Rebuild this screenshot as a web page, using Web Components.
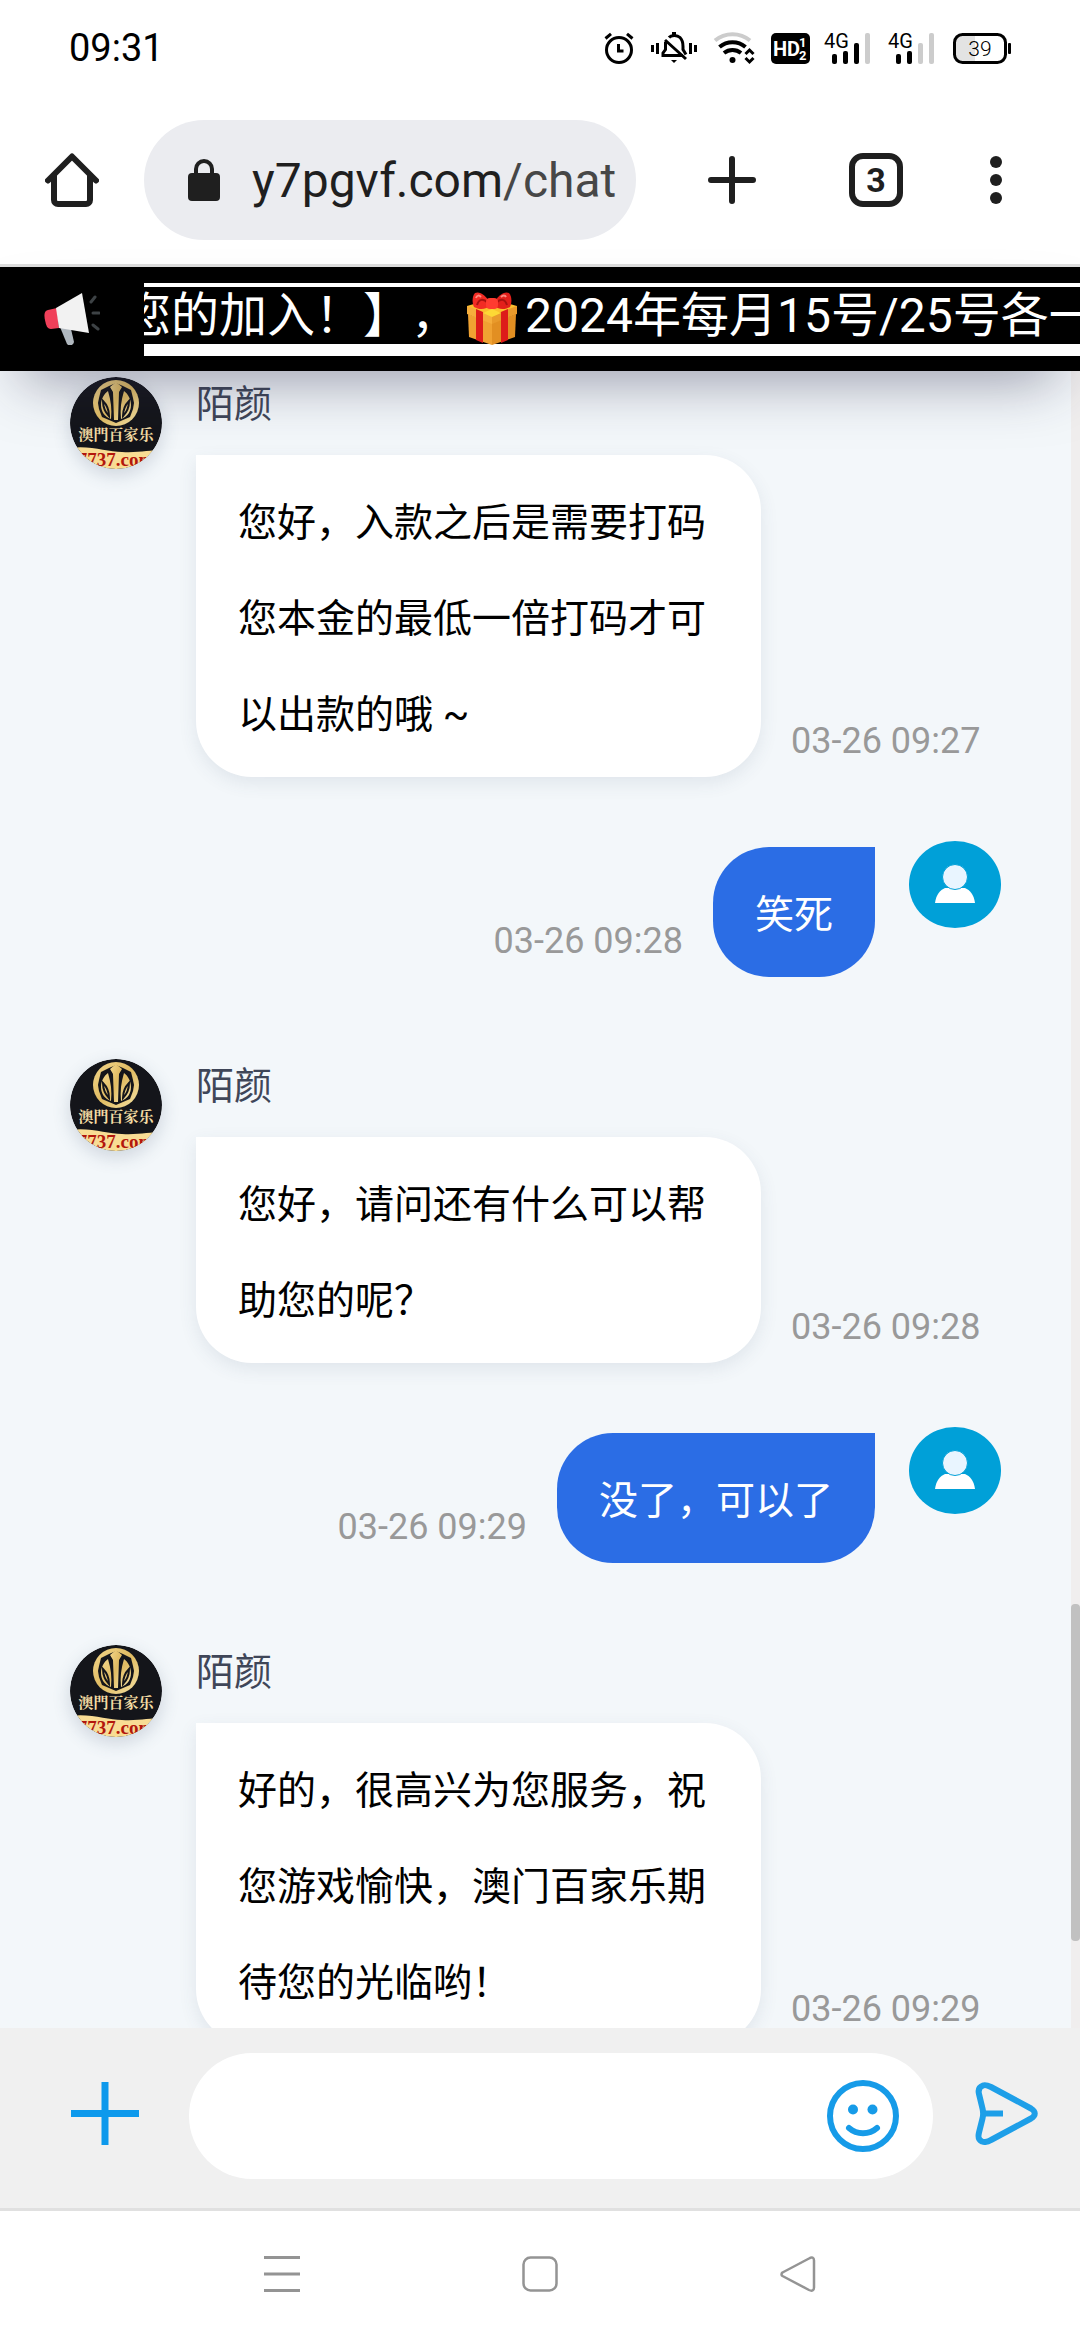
<!DOCTYPE html>
<html lang="zh-CN">
<head>
<meta charset="utf-8">
<meta name="viewport" content="width=device-width, initial-scale=1">
<title>chat</title>
<style>
  body {
    margin: 0;
    height: 100vh;
    display: flex;
    flex-direction: column;
    background: #fff;
    color: #000;
    font-family: Roboto, "Noto Sans CJK SC", sans-serif;
    overflow: hidden;
  }
</style>
</head>
<body>
<status-bar time="09:31" battery="39"></status-bar>
<browser-bar host="y7pgvf.com" path="/chat" tabs="3"></browser-bar>
<notice-bar>您的加入！】，<gift-icon></gift-icon>2024年每月15号/25号各一次</notice-bar>
<chat-log>
  <agent-message name="陌颜" time="03-26 09:27">您好，入款之后是需要打码您本金的最低一倍打码才可以出款的哦 ~</agent-message>
  <user-message time="03-26 09:28">笑死</user-message>
  <agent-message name="陌颜" time="03-26 09:28">您好，请问还有什么可以帮助您的呢？</agent-message>
  <user-message time="03-26 09:29">没了，可以了</user-message>
  <agent-message name="陌颜" time="03-26 09:29">好的，很高兴为您服务，祝您游戏愉快，澳门百家乐期待您的光临哟！</agent-message>
</chat-log>
<chat-composer></chat-composer>
<nav-bar></nav-bar>

<script>
const buttonReset = `
  button {
    display: flex;
    align-items: center;
    justify-content: center;
    flex: none;
    margin: 0;
    padding: 0;
    border: 0;
    background: none;
    font: inherit;
    color: inherit;
  }
  svg { display: block; flex: none; }`;

class StatusBar extends HTMLElement {
  constructor() {
    super();
    this.attachShadow({ mode: "open" });
    this.shadowRoot.innerHTML = `
    <style>
      :host {
        display: flex;
        flex: none;
        align-items: center;
        justify-content: space-between;
        height: 96px;
        padding: 0 69px;
        font-size: 38px;
      }
      .icons { display: flex; align-items: center; gap: 17px; }
      svg { display: block; overflow: visible; }
    </style>
    <span class="time"></span>
    <div class="icons">
      <svg width="30" height="32" viewBox="0 0 30 32" fill="none" stroke="#000" stroke-width="3">
        <circle cx="15" cy="18" r="12.5"/>
        <path d="M1.500 6.500L7 1.800M28.500 6.500L23 1.800"/>
        <path d="M14.500 12v7h5"/>
      </svg>
      <svg width="46" height="32" viewBox="0 0 46 32" fill="none" stroke="#000" stroke-width="3">
        <path d="M1.500 13v7M6.500 11v11M39.500 11v11M44.500 13v7"/>
        <path d="M18 5.500C20 3 26 2.500 29 5.500c2.500 2.500 3 5 3 9v3l3 5"/>
        <path d="M14.500 10v7.500L12 21v2.500h20M14 8l21 19"/>
        <path d="M23 0v4" stroke-width="4"/>
        <path d="M20 28h6l-3 3z" fill="#000" stroke="none"/>
      </svg>
      <svg width="40" height="32" viewBox="0 0 40 32" fill="none" stroke-width="4">
        <path d="M1 8.500C11 0 26 0 36 8.500" stroke="#ccc"/>
        <path d="M5.500 15C13 8.500 24 8.500 31.500 15M10 21c5-4 12-4 17 0" stroke="#000"/>
        <circle cx="18.500" cy="28" r="3" fill="#000"/>
        <path d="M31.500 22l4-4 4 4M31.500 26l4 4 4-4" stroke="#000" stroke-width="3"/>
      </svg>
      <svg width="39" height="31" viewBox="0 0 39 31" fill="#fff" font-family="Roboto" font-weight="700">
        <rect width="39" height="31" rx="5" fill="#000"/>
        <text x="2" y="23" font-size="20">HD</text>
        <text x="28" y="14" font-size="13">1</text>
        <text x="28" y="27" font-size="13">2</text>
      </svg>
      <svg width="46" height="32" viewBox="0 0 46 32" font-family="Roboto">
        <text x="-3" y="16" font-size="20">4G</text>
        <rect x="5" y="22" width="5" height="10" rx="2"/>
        <rect x="16" y="19" width="5" height="13" rx="2"/>
        <rect x="27" y="11" width="5" height="21" rx="2"/>
        <rect x="38" y="1" width="5" height="31" rx="2" fill="#ccc"/>
      </svg>
      <svg width="46" height="32" viewBox="0 0 46 32" font-family="Roboto">
        <text x="-2" y="16" font-size="20">4G</text>
        <rect x="6" y="22" width="5" height="10" rx="2"/>
        <rect x="17" y="19" width="5" height="13" rx="2"/>
        <rect x="28" y="11" width="5" height="21" rx="2" fill="#ccc"/>
        <rect x="39" y="1" width="5" height="31" rx="2" fill="#ccc"/>
      </svg>
      <svg width="58" height="31" viewBox="0 0 58 31" font-family="Roboto" font-weight="300">
        <rect x="1.500" y="1.500" width="51" height="28" rx="8" fill="#fff"/>
        <path d="M22 1.500H9.500a8 8 0 0 0-8 8v12a8 8 0 0 0 8 8H22z" fill="#e3e3e3"/>
        <rect x="1.500" y="1.500" width="51" height="28" rx="8" fill="none" stroke="#000" stroke-width="3"/>
        <rect x="55" y="10" width="3" height="11" rx="1"/>
        <text class="level" x="27" y="23" font-size="21" text-anchor="middle"></text>
      </svg>
    </div>`;
  }
  connectedCallback() {
    this.shadowRoot.querySelector(".time").textContent = this.getAttribute("time");
    this.shadowRoot.querySelector(".level").textContent = this.getAttribute("battery");
  }
}

class BrowserBar extends HTMLElement {
  constructor() {
    super();
    this.attachShadow({ mode: "open" });
    this.shadowRoot.innerHTML = `
    <style>
      ${buttonReset}
      :host {
        display: flex;
        flex: none;
        align-items: center;
        height: 168px;
        padding-right: 36px;
        border-bottom: 3px solid #dedede;
        color: #1f1f1f;
      }
      button { width: 144px; height: 144px; }
      .more { width: 96px; }
      .address {
        flex: 1;
        min-width: 0;
        display: flex;
        align-items: center;
        gap: 32px;
        height: 120px;
        margin-right: 24px;
        padding: 0 24px 0 44px;
        box-sizing: border-box;
        border-radius: 60px;
        background: #ebecf0;
        font-size: 48px;
        white-space: nowrap;
        color: inherit;
        text-decoration: none;
      }
      .path { color: #474747; }
      .tabs span {
        display: flex;
        align-items: center;
        justify-content: center;
        width: 54px;
        height: 54px;
        box-sizing: border-box;
        border: 6px solid;
        border-radius: 14px;
        font-size: 34px;
        font-weight: 700;
      }
    </style>
    <button aria-label="Home">
      <svg width="54" height="54" viewBox="0 0 54 54" fill="none" stroke="#1f1f1f" stroke-width="6" stroke-linecap="round" stroke-linejoin="round">
        <path d="M3 27.500L27 3.500l24 24"/>
        <path d="M9 23v24a4 4 0 0 0 4 4h28a4 4 0 0 0 4-4V23"/>
      </svg>
    </button>
    <a class="address" href="#">
      <svg width="32" height="42" viewBox="0 0 32 42">
        <path d="M8 16v-6a8 8 0 0 1 16 0v6" fill="none" stroke="#1f1f1f" stroke-width="4"/>
        <rect y="14" width="32" height="28" rx="4" fill="#1f1f1f"/>
      </svg>
      <span><span class="host"></span><span class="path"></span></span>
    </a>
    <button aria-label="New tab">
      <svg width="48" height="48" viewBox="0 0 48 48" stroke="#1f1f1f" stroke-width="6" stroke-linecap="round">
        <path d="M24 3v42M3 24h42"/>
      </svg>
    </button>
    <button class="tabs" aria-label="Tabs"><span></span></button>
    <button class="more" aria-label="More">
      <svg width="12" height="48" viewBox="0 0 12 48" fill="#1f1f1f">
        <circle cx="6" cy="6" r="6"/><circle cx="6" cy="24" r="6"/><circle cx="6" cy="42" r="6"/>
      </svg>
    </button>`;
  }
  connectedCallback() {
    this.shadowRoot.querySelector(".host").textContent = this.getAttribute("host");
    this.shadowRoot.querySelector(".path").textContent = this.getAttribute("path");
    this.shadowRoot.querySelector(".tabs span").textContent = this.getAttribute("tabs");
  }
}

class GiftIcon extends HTMLElement {
  constructor() {
    super();
    this.attachShadow({ mode: "open" });
    this.shadowRoot.innerHTML = `
    <style>
      :host { display: inline-block; width: 66px; vertical-align: middle; }
      svg { display: block; margin: 0 auto; }
    </style>
    <svg width="50" height="54" viewBox="0 0 50 54">
      <path d="M1 22l24 9v22L2 45z" fill="#f0a232"/>
      <path d="M49 22l-24 9v22l23-8z" fill="#e28f22"/>
      <path d="M0 14l24-7 26 7v7l-25 10L0 21z" fill="#fbc02d"/>
      <path d="M0 14l25 9v9L0 22z" fill="#f6ae3c"/>
      <path d="M50 14l-25 9v9l25-10z" fill="#e99a2b"/>
      <path d="M9 17l7 3v31l-7-3zM41 17l-7 3v31l7-3z" fill="#dd1c1a"/>
      <path d="M25 17l9 4-9 4-9-4z" fill="#fdd835"/>
      <path d="M24 13C19 2 12-1 8 1c-3 3-3 10-1 14 5 3 12 3 17-2z" fill="#f22c24"/>
      <path d="M26 13C31 2 38-1 42 1c3 3 3 10 1 14-5 3-12 3-17-2z" fill="#e3201b"/>
      <path d="M10 13c2-6 6-7 11-2M40 13c-2-6-6-7-11-2" fill="none" stroke="#a9120f" stroke-width="2"/>
      <path d="M9 6c1-3 3-3 5-1M34 5c2-2 4-2 5 0" fill="none" stroke="#ff8a80" stroke-width="2"/>
      <rect x="19" y="6" width="12" height="11" rx="4" fill="#ff3b30"/>
    </svg>`;
  }
}

class NoticeBar extends HTMLElement {
  constructor() {
    super();
    this.attachShadow({ mode: "open" });
    this.shadowRoot.innerHTML = `
    <style>
      :host {
        display: flex;
        flex: none;
        align-items: center;
        position: relative;
        z-index: 1;
        height: 104px;
        background: #000;
        color: #fff;
        box-shadow: 0 30px 60px -24px rgba(40, 40, 72, .5);
      }
      .horn { display: flex; justify-content: center; width: 144px; flex: none; }
      .marquee {
        flex: 1;
        min-width: 0;
        overflow: hidden;
        padding: 4px 0 12px;
        background: #fff;
      }
      .text {
        height: 57px;
        line-height: 57px;
        font-size: 48px;
        white-space: nowrap;
        background: #000;
        text-indent: -21px;
        text-spacing-trim: space-all;
      }
      ::slotted(*) { text-indent: 0; }
    </style>
    <div class="horn">
      <svg width="56" height="52" viewBox="0 0 56 52">
        <path d="M16 34l11 2 3 13a4 4 0 0 1-7 2z" fill="#b0b8bf"/>
        <path d="M13 15L4 17c-4 1-4 5-3 10s2 9 6 9l8-1z" fill="#f0405a"/>
        <path d="M12 15L38 0l7 40-30-5z" fill="#f2f2f2"/>
        <path d="M47 9l4-5M49 20h6M49 32l5 4" stroke="#3d4245" stroke-width="3" stroke-linecap="round"/>
      </svg>
    </div>
    <div class="marquee"><div class="text"><slot></slot></div></div>`;
  }
}

class ChatLog extends HTMLElement {
  constructor() {
    super();
    this.attachShadow({ mode: "open" });
    this.shadowRoot.innerHTML = `
    <style>
      :host {
        display: flex;
        flex: 1;
        min-height: 0;
        overflow: hidden;
        background: #f3f7fa;
      }
      .list {
        flex: 1;
        min-width: 0;
        padding: 6px 70px 0;
      }
      .track {
        display: grid;
        grid-template-rows: 1233fr 337fr 87fr;
        width: 9px;
        background: #f0eeee;
      }
      .thumb { grid-row: 2; background: #c1c1c1; border-radius: 4px; }
    </style>
    <div class="list"><slot></slot></div>
    <div class="track"><div class="thumb"></div></div>`;
  }
}

// shared by both sides of the conversation
const messageStyle = `
  .bubble {
    padding: 20px 42px 14px;
    border-radius: 56px;
    font-size: 39px;
    line-height: 96px;
    text-spacing-trim: space-all;
  }
  time {
    flex: none;
    margin-bottom: 15px;
    font-size: 36px;
    line-height: 42px;
    color: #999;
  }
  svg { display: block; flex: none; }`;

class AgentMessage extends HTMLElement {
  constructor() {
    super();
    this.attachShadow({ mode: "open" });
    this.shadowRoot.innerHTML = `
    <style>
      ${messageStyle}
      :host { display: flex; gap: 34px; margin-bottom: 64px; }
      .avatar {
        width: 92px;
        height: 92px;
        border-radius: 50%;
        box-shadow: 0 6px 18px rgba(60, 80, 110, .2);
      }
      .body { flex: 1; min-width: 0; }
      .name { font-size: 38px; line-height: 54px; margin-bottom: 24px; color: #3f4658; }
      .row { display: flex; align-items: flex-end; gap: 30px; }
      .bubble {
        max-width: 481px;
        border-top-left-radius: 0;
        background: #fff;
        box-shadow: 0 6px 18px rgba(60, 80, 110, .1);
      }
    </style>
    <svg class="avatar" viewBox="0 0 92 92">
      <defs>
        <clipPath id="round"><circle cx="46" cy="46" r="46"/></clipPath>
        <linearGradient id="gold" x2="1" y2="1">
          <stop stop-color="#f2d68b"/><stop offset=".5" stop-color="#e0bb62"/><stop offset="1" stop-color="#f5e2a4"/>
        </linearGradient>
      </defs>
      <g clip-path="url(#round)">
        <rect width="92" height="92" fill="#14151a"/>
        <circle cx="46" cy="26" r="23" fill="url(#gold)"/>
        <path d="M46 6l7 3 8 4 2 8 1 5-1 6-3 8-7 3-7 3-7-3-7-3-3-8-1-6 1-5 2-8 8-4z" fill="#14151a"/>
        <path d="M46 5l6 5-3 5-1 28h-4l-1-28-3-5z" fill="url(#gold)"/>
        <path d="M41 42c1-10 0-18-3-28-4 3-7 8-7 14 0 7 4 12 10 14zM51 42c-1-10 0-18 3-28 4 3 7 8 7 14 0 7-4 12-10 14z" fill="url(#gold)"/>
        <path d="M33 24c4 4 6 9 6 15-4-4-6-9-6-15zM59 24c-4 4-6 9-6 15 4-4 6-9 6-15z" fill="url(#gold)" stroke="#14151a" stroke-width="2"/>
        <path d="M0 71c20-3 38 4 52 4 16 1 28-2 40-2v19H0z" fill="#f8dc94"/>
        <text x="46" y="63" font-family="Noto Serif CJK SC, Noto Sans CJK SC, serif" font-weight="700" font-size="15" text-anchor="middle" fill="#f3dca4">澳門百家乐</text>
        <text x="46" y="89" font-family="Liberation Serif, serif" font-weight="700" font-size="19" text-anchor="middle" fill="#b3170c">7737.com</text>
      </g>
    </svg>
    <div class="body">
      <div class="name"></div>
      <div class="row">
        <div class="bubble"><slot></slot></div>
        <time></time>
      </div>
    </div>`;
  }
  connectedCallback() {
    this.shadowRoot.querySelector(".name").textContent = this.getAttribute("name");
    this.shadowRoot.querySelector("time").textContent = this.getAttribute("time");
  }
}

class UserMessage extends HTMLElement {
  constructor() {
    super();
    this.attachShadow({ mode: "open" });
    this.shadowRoot.innerHTML = `
    <style>
      ${messageStyle}
      :host {
        display: flex;
        justify-content: flex-end;
        align-items: flex-end;
        gap: 30px;
        margin-bottom: 82px;
      }
      .bubble {
        margin-top: 6px;
        border-top-right-radius: 0;
        background: #2b6de5;
        color: #fff;
      }
      .avatar { align-self: flex-start; margin-left: 4px; }
    </style>
    <time></time>
    <div class="bubble"><slot></slot></div>
    <svg class="avatar" width="92" height="87" viewBox="0 0 92 87">
      <ellipse cx="46" cy="43.500" rx="46" ry="43.500" fill="#00a0d8"/>
      <path d="M26 62c1-8 5-13 10-15h20c5 2 9 7 10 15z" fill="#fff"/>
      <ellipse cx="46" cy="36" rx="12.500" ry="12.500" fill="#e9f5ff" stroke="#00a0d8" stroke-width="1"/>
    </svg>`;
  }
  connectedCallback() {
    this.shadowRoot.querySelector("time").textContent = this.getAttribute("time");
  }
}

class ChatComposer extends HTMLElement {
  constructor() {
    super();
    this.attachShadow({ mode: "open" });
    this.shadowRoot.innerHTML = `
    <style>
      ${buttonReset}
      :host {
        display: flex;
        flex: none;
        align-items: center;
        padding: 25px 42px 29px 71px;
        background: #f0f0f0;
        border-bottom: 3px solid #e0e0e0;
      }
      .action { padding-bottom: 5px; }
      .field {
        flex: 1;
        min-width: 0;
        display: flex;
        align-items: center;
        height: 126px;
        margin: 0 42px 0 50px;
        padding: 0 34px 0 56px;
        box-sizing: border-box;
        border-radius: 63px;
        background: #fff;
      }
      input {
        flex: 1;
        min-width: 0;
        height: 96px;
        padding: 0;
        border: 0;
        outline: 0;
        background: none;
        font: 39px Roboto, "Noto Sans CJK SC", sans-serif;
      }
    </style>
    <button class="action" aria-label="添加">
      <svg width="68" height="63" viewBox="0 0 68 63" stroke="#0d99ec" stroke-width="7">
        <path d="M34 0v63M0 31.500h68"/>
      </svg>
    </button>
    <div class="field">
      <input type="text" aria-label="消息">
      <button aria-label="表情">
        <svg width="72" height="72" viewBox="0 0 72 72" fill="none" stroke="#169be8" stroke-width="6">
          <circle cx="36" cy="36" r="33"/>
          <path d="M22 48c8 7 20 7 28 0" stroke-linecap="round"/>
          <circle cx="26" cy="29.500" r="5" fill="#169be8" stroke="none"/>
          <circle cx="45.500" cy="29.500" r="5" fill="#169be8" stroke="none"/>
        </svg>
      </button>
    </div>
    <button class="action" aria-label="发送">
      <svg width="63" height="63" viewBox="0 0 63 63" fill="none" stroke="#1e9fe8" stroke-width="6" stroke-linejoin="round">
        <path d="M8 3.500c2-1 5 0 8 1.500l40 21.500c5 3 5 7 0 10L16 58c-3 2-6 2.500-9 1.500-4-2-4-5-3-9l3.500-14c1-4 1-6 0-10L4 12c-1-4 0-7 4-8.500z"/>
        <path d="M9 31.500h19"/>
      </svg>
    </button>`;
  }
}

class NavBar extends HTMLElement {
  constructor() {
    super();
    this.attachShadow({ mode: "open" });
    this.shadowRoot.innerHTML = `
    <style>
      ${buttonReset}
      :host {
        display: flex;
        flex: none;
        align-items: flex-start;
        justify-content: center;
        height: 129px;
        background: #fff;
      }
      button { width: 258px; height: 126px; }
    </style>
    <button aria-label="Recents">
      <svg width="36" height="36" viewBox="0 0 36 36" stroke="#949494" stroke-width="3">
        <path d="M0 1.500h36M0 18h36M0 34.500h36"/>
      </svg>
    </button>
    <button aria-label="Home screen">
      <svg width="36" height="36" viewBox="0 0 36 36" fill="none" stroke="#949494" stroke-width="2.500">
        <rect x="1.500" y="1.500" width="33" height="33" rx="7"/>
      </svg>
    </button>
    <button aria-label="Back">
      <svg width="36" height="36" viewBox="0 0 36 36" fill="none" stroke="#949494" stroke-width="2.500" stroke-linejoin="round">
        <path d="M2.500 16.500L29 2.500c3-2 5-1 5 2v27c0 3-2 4-5 2.500L2.500 20q-2-1.500 0-3.500z"/>
      </svg>
    </button>`;
  }
}

customElements.define("status-bar", StatusBar);
customElements.define("browser-bar", BrowserBar);
customElements.define("gift-icon", GiftIcon);
customElements.define("notice-bar", NoticeBar);
customElements.define("chat-log", ChatLog);
customElements.define("agent-message", AgentMessage);
customElements.define("user-message", UserMessage);
customElements.define("chat-composer", ChatComposer);
customElements.define("nav-bar", NavBar);
</script>
</body>
</html>
